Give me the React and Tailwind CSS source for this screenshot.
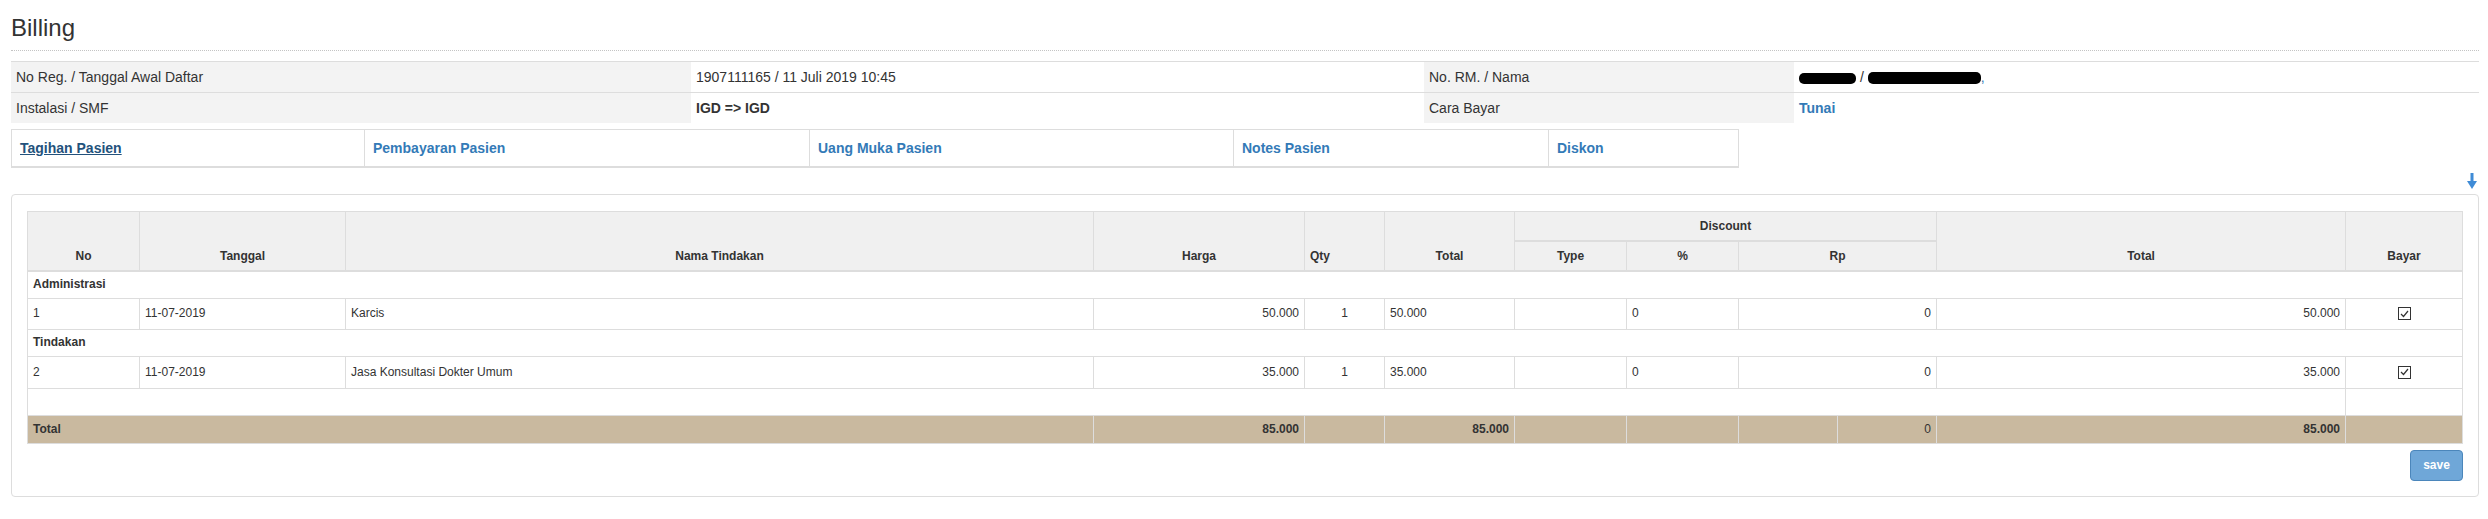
import React from 'react';

const tabs = [
  { label: 'Tagihan Pasien', w: 'w-[353px]', active: true },
  { label: 'Pembayaran Pasien', w: 'w-[445px]' },
  { label: 'Uang Muka Pasien', w: 'w-[424px]' },
  { label: 'Notes Pasien', w: 'w-[315px]' },
  { label: 'Diskon', w: 'w-[189px]' },
];

const rows = [
  { group: 'Administrasi', no: '1', tgl: '11-07-2019', nama: 'Karcis', harga: '50.000', h: 'h-[31px]' },
  { group: 'Tindakan', no: '2', tgl: '11-07-2019', nama: 'Jasa Konsultasi Dokter Umum', harga: '35.000', h: 'h-[32px]' },
];

const Checkbox = () => (
  <span className="inline-flex h-[13px] w-[13px] items-center justify-center border border-[#333] bg-white align-middle">
    <svg width="9" height="8" viewBox="0 0 9 8">
      <path d="M1 4 L3.5 6.5 L8 1" fill="none" stroke="#333" strokeWidth="1.2" />
    </svg>
  </span>
);

const th = 'border border-[#ddd] bg-[#f0f0f0] px-[5px] py-[5px] font-bold';
const td = 'border border-[#ddd] px-[5px] py-0 leading-[17px]';
const tt = 'border border-[#ddd] px-[5px] py-0 leading-[17px] font-bold';

const App = () => {
  return (
    <div className="h-[519px] w-[2488px] overflow-hidden bg-white pl-[11px] pr-[9px] font-['Liberation_Sans',Arial,sans-serif] text-[14px] text-[#333]">
      {/* title */}
      <div className="border-b border-dotted border-[#c4c4c4] pt-[15px] pb-[9px]">
        <h3 className="text-[24px] leading-[26px] font-normal">Billing</h3>
      </div>

      {/* registration info */}
      <table className="mt-[10px] w-[2468px] table-fixed border-collapse">
        <colgroup>
          <col className="w-[680px]" />
          <col className="w-[733px]" />
          <col className="w-[370px]" />
          <col className="w-[685px]" />
        </colgroup>
        <tbody>
          <tr className="border-t border-[#ddd]">
            <td className="bg-[#f3f3f3] p-[5px] leading-[20px]">No Reg. / Tanggal Awal Daftar</td>
            <td className="p-[5px] leading-[20px]">1907111165 / 11 Juli 2019 10:45</td>
            <td className="bg-[#f3f3f3] p-[5px] leading-[20px]">No. RM. / Nama</td>
            <td className="p-[5px] leading-[20px]">
              <span className="inline-block h-[11px] w-[57px] rounded-[5px] bg-black align-middle" />
              <span> / </span>
              <span className="inline-block h-[12px] w-[113px] rounded-[5px] bg-black align-middle" />
              <span className="text-[#337ab7]">,</span>
            </td>
          </tr>
          <tr className="border-t border-[#ddd]">
            <td className="bg-[#f3f3f3] p-[5px] leading-[20px]">Instalasi / SMF</td>
            <td className="p-[5px] leading-[20px] font-bold">IGD =&gt; IGD</td>
            <td className="bg-[#f3f3f3] p-[5px] leading-[20px]">Cara Bayar</td>
            <td className="p-[5px] leading-[20px] font-bold text-[#337ab7]">Tunai</td>
          </tr>
        </tbody>
      </table>

      {/* tabs */}
      <div className="mt-[6px] flex w-[1728px] divide-x divide-[#ddd] border border-b-2 border-[#ddd]">
        {tabs.map((t) => (
          <div key={t.label} className={`${t.w} px-[8px] py-[8px] leading-[20px]`}>
            <a
              className={
                t.active
                  ? 'font-bold text-[#23527c] underline'
                  : 'font-bold text-[#337ab7]'
              }
            >
              {t.label}
            </a>
          </div>
        ))}
      </div>

      {/* arrow */}
      <div className="flex h-[26px] items-center justify-end pr-[2px]">
        <svg width="10" height="16" viewBox="0 0 10 16">
          <rect x="3.5" y="0" width="3" height="9" fill="#3f8bd6" />
          <path d="M0 8 L10 8 L5 16 Z" fill="#3f8bd6" />
        </svg>
      </div>

      {/* billing panel */}
      <div className="rounded-[4px] border border-[#ddd] px-[15px] pt-[16px] pb-[15px]">
        <table className="w-[2435px] table-fixed border-collapse text-[12px]">
          <colgroup>
            <col className="w-[112px]" />
            <col className="w-[206px]" />
            <col className="w-[748px]" />
            <col className="w-[211px]" />
            <col className="w-[80px]" />
            <col className="w-[130px]" />
            <col className="w-[112px]" />
            <col className="w-[112px]" />
            <col className="w-[99px]" />
            <col className="w-[99px]" />
            <col className="w-[409px]" />
            <col className="w-[117px]" />
          </colgroup>
          <thead>
            <tr className="h-[27px]">
              <th rowSpan={2} className={`${th} border-b-2 text-center align-bottom`}>No</th>
              <th rowSpan={2} className={`${th} border-b-2 text-center align-bottom`}>Tanggal</th>
              <th rowSpan={2} className={`${th} border-b-2 text-center align-bottom`}>Nama Tindakan</th>
              <th rowSpan={2} className={`${th} border-b-2 text-center align-bottom`}>Harga</th>
              <th rowSpan={2} className={`${th} border-b-2 text-left align-bottom`}>Qty</th>
              <th rowSpan={2} className={`${th} border-b-2 text-center align-bottom`}>Total</th>
              <th colSpan={4} className={`${th} border-b-2 text-center align-middle`}>Discount</th>
              <th rowSpan={2} className={`${th} border-b-2 text-center align-bottom`}>Total</th>
              <th rowSpan={2} className={`${th} border-b-2 text-center align-bottom`}>Bayar</th>
            </tr>
            <tr className="h-[28px]">
              <th className={`${th} border-b-2 text-center align-bottom`}>Type</th>
              <th className={`${th} border-b-2 text-center align-bottom`}>%</th>
              <th colSpan={2} className={`${th} border-b-2 text-center align-bottom`}>Rp</th>
            </tr>
          </thead>
          <tbody>
            {rows.map((r) => (
              <React.Fragment key={r.no}>
                <tr className="h-[27px]">
                  <td colSpan={12} className={tt}>{r.group}</td>
                </tr>
                <tr className={r.h}>
                  <td className={td}>{r.no}</td>
                  <td className={td}>{r.tgl}</td>
                  <td className={td}>{r.nama}</td>
                  <td className={`${td} text-right`}>{r.harga}</td>
                  <td className={`${td} text-center`}>1</td>
                  <td className={td}>{r.harga}</td>
                  <td className={td}></td>
                  <td className={td}>0</td>
                  <td colSpan={2} className={`${td} text-right`}>0</td>
                  <td className={`${td} text-right`}>{r.harga}</td>
                  <td className={`${td} text-center`}>
                    <Checkbox />
                  </td>
                </tr>
              </React.Fragment>
            ))}
            <tr className="h-[27px]">
              <td colSpan={11} className={td}></td>
              <td className={td}></td>
            </tr>
            <tr className="h-[28px] bg-[#c9b99f]">
              <td colSpan={3} className={tt}>Total</td>
              <td className={`${tt} text-right`}>85.000</td>
              <td className={tt}></td>
              <td className={`${tt} text-right`}>85.000</td>
              <td className={tt}></td>
              <td className={tt}></td>
              <td className={tt}></td>
              <td className={`${td} text-right`}>0</td>
              <td className={`${tt} text-right`}>85.000</td>
              <td className={tt}></td>
            </tr>
          </tbody>
        </table>
        <div className="mt-[6px] flex justify-end">
          <button className="h-[31px] w-[53px] rounded-[4px] border border-[#4b86bb] bg-[#6fa7d8] text-[12px] font-bold text-white">
            save
          </button>
        </div>
      </div>
    </div>
  );
};

export default App;
